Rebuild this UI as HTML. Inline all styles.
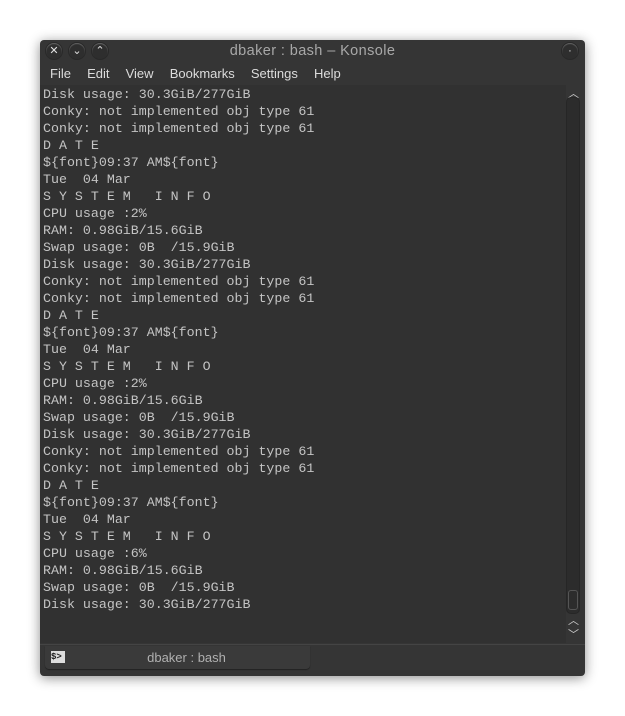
<!DOCTYPE html>
<html><head><style>
body{margin:0;width:625px;height:716px;background:#fff;position:relative;overflow:hidden;font-family:"Liberation Sans",sans-serif}
.win{position:absolute;left:40px;top:40px;width:545px;height:636px;background:#353535;border-radius:4px;box-shadow:0 2px 12px rgba(0,0,0,.45)}
.title{position:absolute;left:0;top:0;width:545px;height:24px;text-align:center;line-height:23px;color:#a8a8a8;font-size:14.5px;letter-spacing:.4px}
.btn{position:absolute;top:3px;width:16px;height:16px;border-radius:50%;background:#2e2e2e;box-shadow:0 1px 1px #666 inset,0 0 0 1px #292929;color:#e0e0e0;font-size:11px;text-align:center;line-height:16px}
.menu{position:absolute;left:10px;top:26px;color:#dcdcdc;font-size:13px}
.menu span{margin-right:12.5px}
.term{position:absolute;left:0;top:45px;width:526px;height:558px;background:#313131;font-family:"Liberation Mono",monospace;font-size:13.3px;color:#c4c4c4;line-height:17px;padding:1px 0 0 3px;box-sizing:border-box;white-space:pre}
.sb{position:absolute;left:527px;top:58px;width:12px;height:515px;border-radius:4px;background:#2c2c2c;box-shadow:0 0 0 1px #262626}
.thumb{position:absolute;left:528px;top:550px;width:10px;height:20px;border-radius:3px;border:1px solid #555;box-sizing:border-box}
.arr{position:absolute;left:528px;color:#ccc;font-size:11px}
.tabbar{position:absolute;left:0;top:604px;width:545px;height:1px;background:#444}
.tab{position:absolute;left:5px;top:606px;width:265px;height:23px;background:#3a3a3a;border-radius:0 0 4px 4px;box-shadow:0 1px 1px #222}
.tab .ic{position:absolute;left:6px;top:5px;width:14px;height:12px;background:#ddd;color:#222;font-size:9px;line-height:12px;font-family:"Liberation Mono",monospace;font-weight:bold}
.tab .t{position:absolute;left:9px;width:265px;text-align:center;top:4px;color:#b0b0b0;font-size:13px}
</style></head><body>
<div class="win">
<div class="title">dbaker : bash – Konsole</div>
<div class="btn" style="left:6px">✕</div>
<div class="btn" style="left:29px">⌄</div>
<div class="btn" style="left:52px">⌃</div>
<div class="btn" style="left:522px;top:3px;width:16px;height:16px;line-height:16px">·</div>
<div class="menu"><span>File</span> <span>Edit</span> <span>View</span> <span>Bookmarks</span> <span>Settings</span> <span>Help</span></div>
<div class="term">Disk usage: 30.3GiB/277GiB
Conky: not implemented obj type 61
Conky: not implemented obj type 61
D A T E
${font}09:37 AM${font}
Tue  04 Mar
S Y S T E M   I N F O
CPU usage :2%
RAM: 0.98GiB/15.6GiB
Swap usage: 0B  /15.9GiB
Disk usage: 30.3GiB/277GiB
Conky: not implemented obj type 61
Conky: not implemented obj type 61
D A T E
${font}09:37 AM${font}
Tue  04 Mar
S Y S T E M   I N F O
CPU usage :2%
RAM: 0.98GiB/15.6GiB
Swap usage: 0B  /15.9GiB
Disk usage: 30.3GiB/277GiB
Conky: not implemented obj type 61
Conky: not implemented obj type 61
D A T E
${font}09:37 AM${font}
Tue  04 Mar
S Y S T E M   I N F O
CPU usage :6%
RAM: 0.98GiB/15.6GiB
Swap usage: 0B  /15.9GiB
Disk usage: 30.3GiB/277GiB</div>
<div class="arr" style="top:45px">︿</div>
<div class="sb"></div>
<div class="thumb"></div>
<div class="arr" style="top:572px">︿</div>
<div class="arr" style="top:586px">﹀</div>
<div class="tabbar"></div>
<div class="tab"><div class="ic">$&gt;</div><div class="t">dbaker : bash</div></div>
</div>
</body></html>
